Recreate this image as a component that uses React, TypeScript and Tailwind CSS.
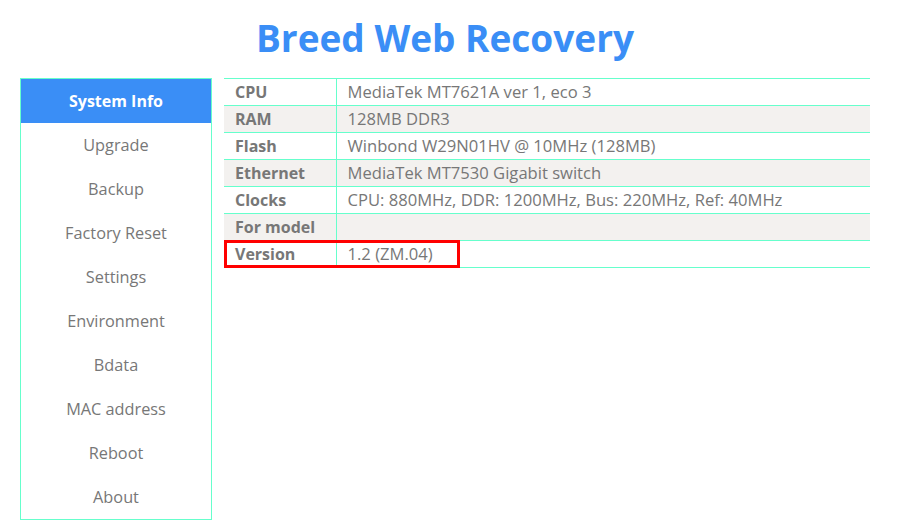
import React from 'react';

const menu = [
  'System Info',
  'Upgrade',
  'Backup',
  'Factory Reset',
  'Settings',
  'Environment',
  'Bdata',
  'MAC address',
  'Reboot',
  'About',
];

const rows: [string, string][] = [
  ['CPU', 'MediaTek MT7621A ver 1, eco 3'],
  ['RAM', '128MB DDR3'],
  ['Flash', 'Winbond W29N01HV @ 10MHz (128MB)'],
  ['Ethernet', 'MediaTek MT7530 Gigabit switch'],
  ['Clocks', 'CPU: 880MHz, DDR: 1200MHz, Bus: 220MHz, Ref: 40MHz'],
  ['For model', ''],
  ['Version', '1.2 (ZM.04)'],
];

export default function App() {
  return (
    <div
      className="w-[908px] h-[527px] bg-white text-[#777] overflow-hidden"
      style={{ fontFamily: '"Open Sans", "Noto Sans", sans-serif' }}
    >
      <h1 className="h-[78px] pt-[12px] pr-[18px] text-center text-[37px] leading-[52px] font-bold text-[#3a8ef6]">
        Breed Web Recovery
      </h1>

      <div className="flex items-start pl-[20px] gap-[12px]">
        {/* side menu */}
        <ul className="w-[192px] border border-[#66ffcc]">
          {menu.map((item, i) => (
            <li
              key={item}
              className={
                i === 0
                  ? 'h-[44px] flex items-center justify-center bg-[#3a8ef6] text-white font-bold text-[16px]'
                  : 'h-[44px] flex items-center justify-center text-[16.3px]'
              }
            >
              {item}
            </li>
          ))}
        </ul>

        {/* info table */}
        <div className="relative w-[646px]">
          <table className="w-full border-collapse">
            <tbody>
              {rows.map(([k, v], i) => (
                <tr
                  key={k}
                  className={
                    i % 2 === 1
                      ? 'h-[27px] bg-[#f3f1ef] border-y border-[#66ffcc]'
                      : 'h-[27px] border-y border-[#66ffcc]'
                  }
                >
                  <td className="w-[112px] px-[11px] py-0 leading-[26px] text-[16px] font-bold border-r border-[#66ffcc]">
                    {k}
                  </td>
                  <td className="px-[11px] py-0 leading-[26px] text-[16.6px] whitespace-nowrap">{v}</td>
                </tr>
              ))}
            </tbody>
          </table>
          {/* highlight marker */}
          <div className="absolute left-0 top-[162px] w-[236px] h-[28px] border-[3px] border-[#ff0000]" />
        </div>
      </div>
    </div>
  );
}
